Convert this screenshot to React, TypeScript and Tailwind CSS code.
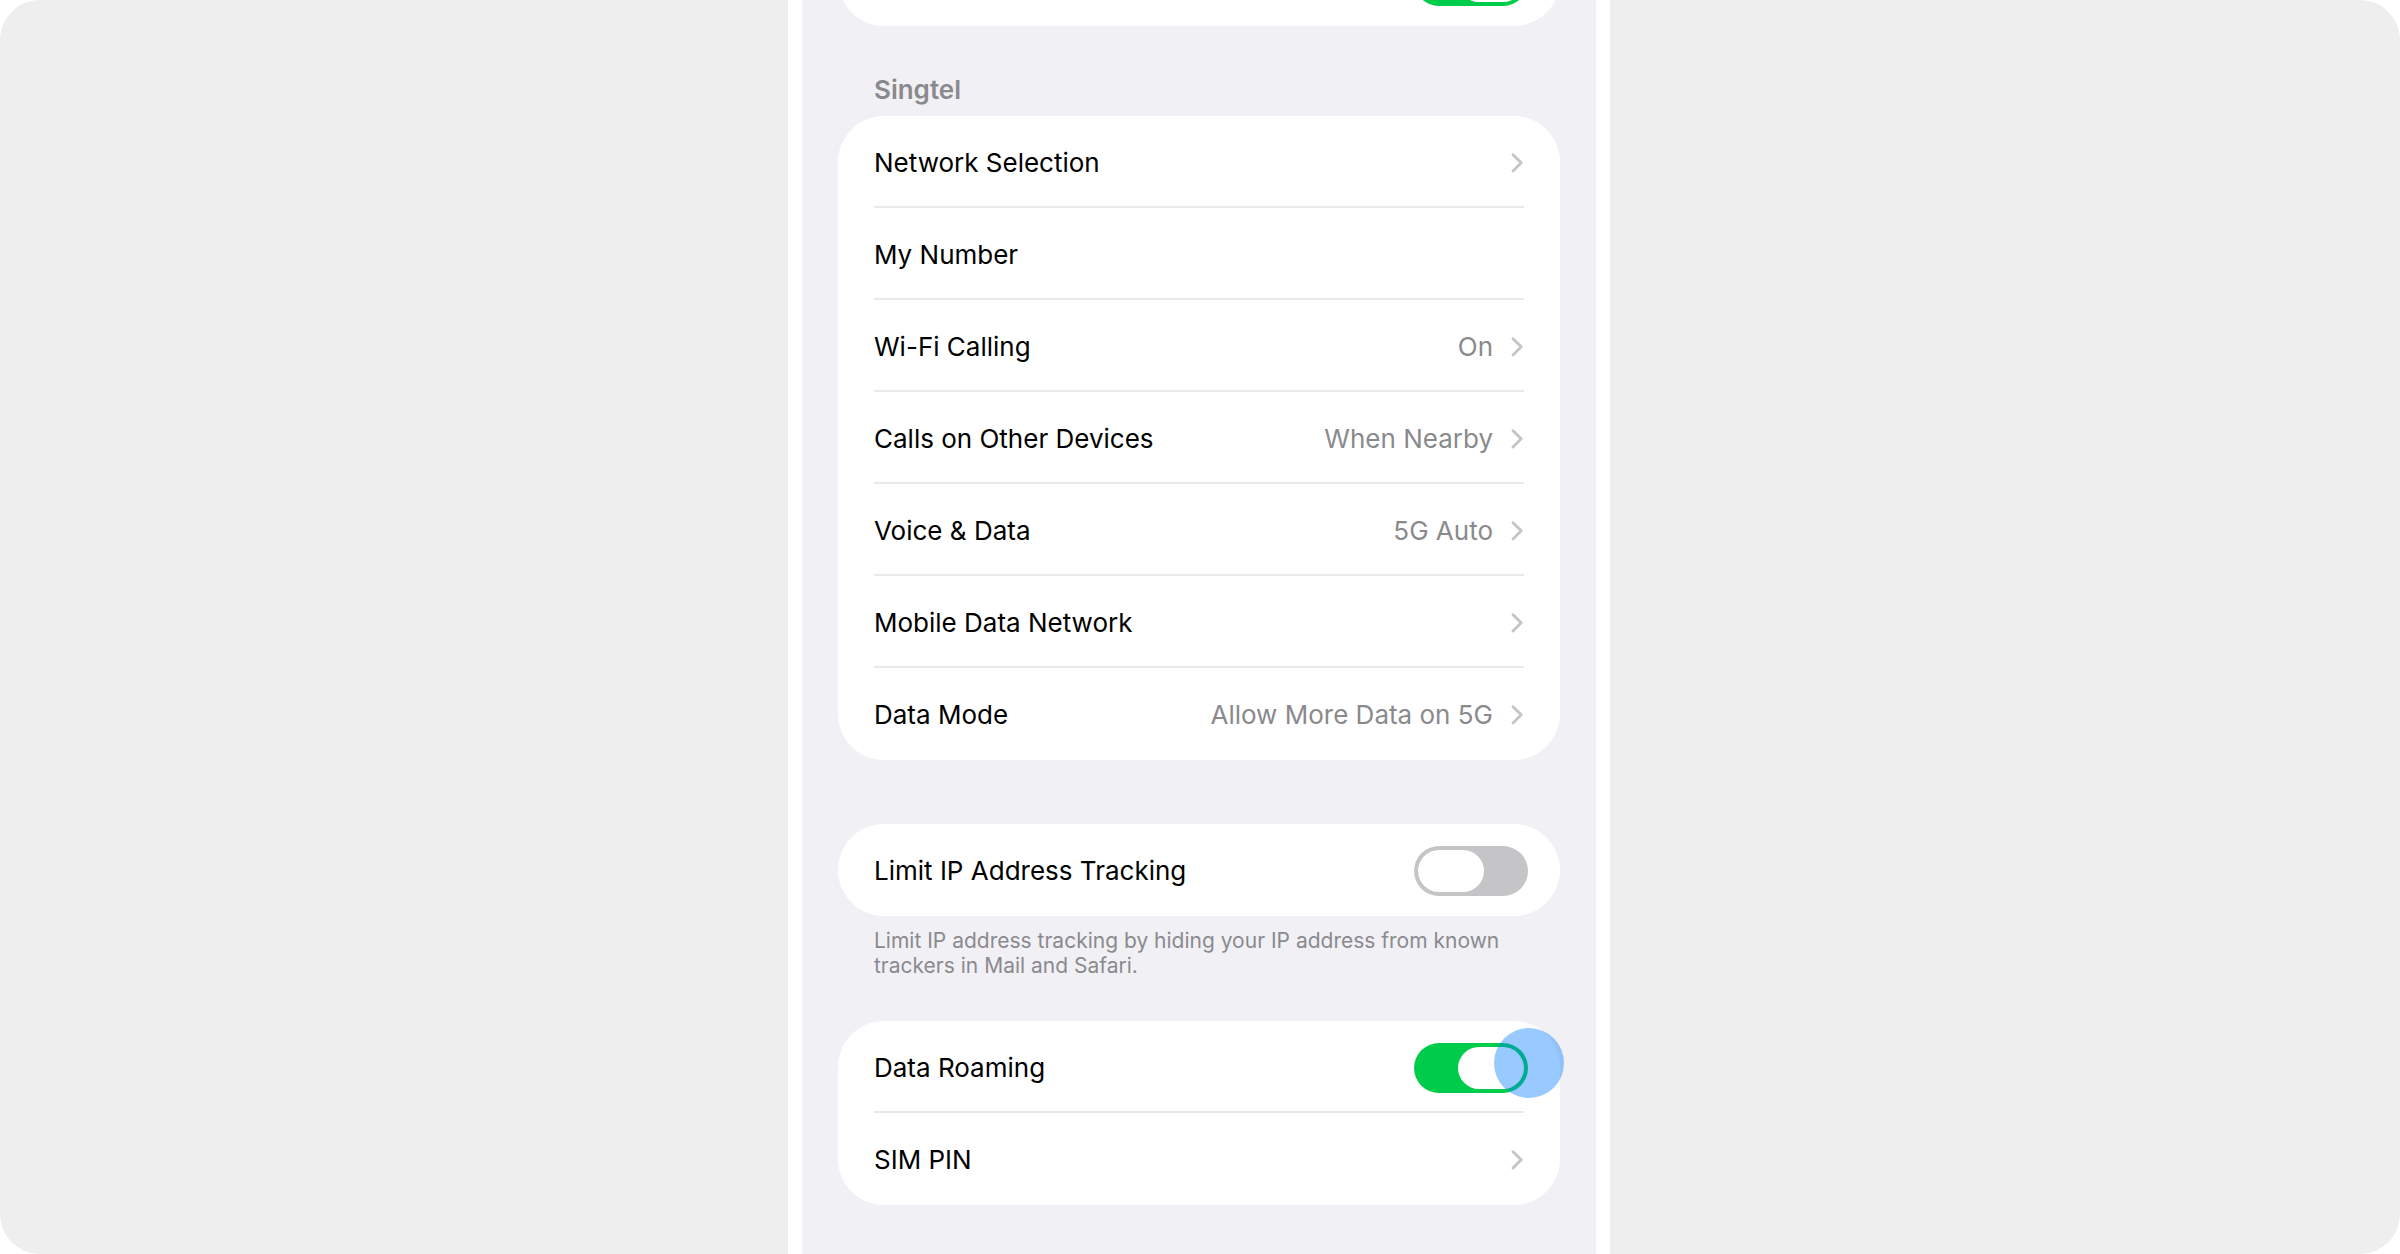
import { PropsWithChildren, useId, useState } from "react";
import clsx from "clsx";

type LinkRowProps = {
  label: string;
  value?: string;
};

type SwitchProps = {
  id?: string;
  label?: string;
  defaultOn?: boolean;
};

type SwitchRowProps = {
  label: string;
  defaultOn?: boolean;
  highlighted?: boolean;
};

const networkRows: LinkRowProps[] = [
  { label: "Wi-Fi Calling", value: "On" },
  { label: "Calls on Other Devices", value: "When Nearby" },
  { label: "Voice & Data", value: "5G Auto" },
  { label: "Mobile Data Network" },
  { label: "Data Mode", value: "Allow More Data on 5G" },
];

const Chevron = () => (
  <svg
    className="h-5 w-3 shrink-0 text-[#c4c4c6]"
    viewBox="0 0 12 20"
    fill="none"
    stroke="currentColor"
    strokeWidth="2.8"
    strokeLinecap="round"
    strokeLinejoin="round"
    aria-hidden="true"
  >
    <path d="M2 1.700 10.200 9.800 2 17.900" />
  </svg>
);

const Card = ({ children }: PropsWithChildren) => (
  <ul className="rounded-[46px] bg-white px-9">{children}</ul>
);

const Row = ({ children }: PropsWithChildren) => (
  <li className="relative flex h-23 items-center border-b-2 border-[#e9e9ea] pt-1 last:border-transparent">
    {children}
  </li>
);

const LinkRow = ({ label, value }: LinkRowProps) => (
  <Row>
    <a href="#" className="flex h-full flex-1 items-center pr-px">
      <span className="flex-1">{label}</span>
      {value && <span className="mr-[18px] text-[#8a8a8d]">{value}</span>}
      <Chevron />
    </a>
  </Row>
);

const Switch = ({ id, label, defaultOn = false }: SwitchProps) => {
  const [on, setOn] = useState(defaultOn);

  return (
    <input
      id={id}
      type="checkbox"
      role="switch"
      aria-label={label}
      checked={on}
      onChange={() => setOn(!on)}
      className={clsx(
        "-mr-1 flex h-[50px] w-[114px] shrink-0 appearance-none items-center rounded-full px-1",
        "before:h-[42px] before:w-[66px] before:rounded-full before:bg-white",
        on ? "justify-end bg-[#00cc4b]" : "justify-start bg-[#c5c5c7]",
      )}
    />
  );
};

const SwitchRow = ({ label, defaultOn, highlighted }: SwitchRowProps) => {
  const id = useId();

  return (
    <Row>
      <label htmlFor={id} className="flex-1">
        {label}
      </label>
      <Switch id={id} defaultOn={defaultOn} />
      {highlighted && (
        <span className="pointer-events-none absolute top-[7px] -right-10 size-[70px] rounded-full bg-[#007aff]/40" />
      )}
    </Row>
  );
};

export default function App() {
  return (
    <div className="min-h-screen bg-white">
      <main className="flex min-h-screen justify-center overflow-hidden rounded-[40px] bg-[#eeeeee] pr-0.5 font-['Inter',sans-serif] text-[26px] leading-8 text-black">
        <div className="flex w-full max-w-[822px] bg-white px-3.5">
          <div className="w-full bg-[#f1f0f5] px-9 pb-12">
            <section className="-mt-[66px]">
              <Card>
                <Row>
                  <div className="flex flex-1 justify-end">
                    <Switch label="Turn On This Line" defaultOn />
                  </div>
                </Row>
              </Card>
            </section>

            <section className="mt-12">
              <h2 className="mb-2.5 px-9 font-semibold text-[#8a8a8e]">
                Singtel
              </h2>
              <Card>
                <LinkRow label="Network Selection" />
                <Row>My Number</Row>
                {networkRows.map((row) => (
                  <LinkRow key={row.label} {...row} />
                ))}
              </Card>
            </section>

            <section className="mt-16">
              <Card>
                <SwitchRow label="Limit IP Address Tracking" />
              </Card>
              <p className="mt-3 px-9 text-[21px] leading-[25px] text-[#8a8a8e]">
                Limit IP address tracking by hiding your IP address from known
                trackers in Mail and Safari.
              </p>
            </section>

            <section className="mt-[43px]">
              <Card>
                <SwitchRow label="Data Roaming" defaultOn highlighted />
                <LinkRow label="SIM PIN" />
              </Card>
            </section>
          </div>
        </div>
      </main>
    </div>
  );
}
